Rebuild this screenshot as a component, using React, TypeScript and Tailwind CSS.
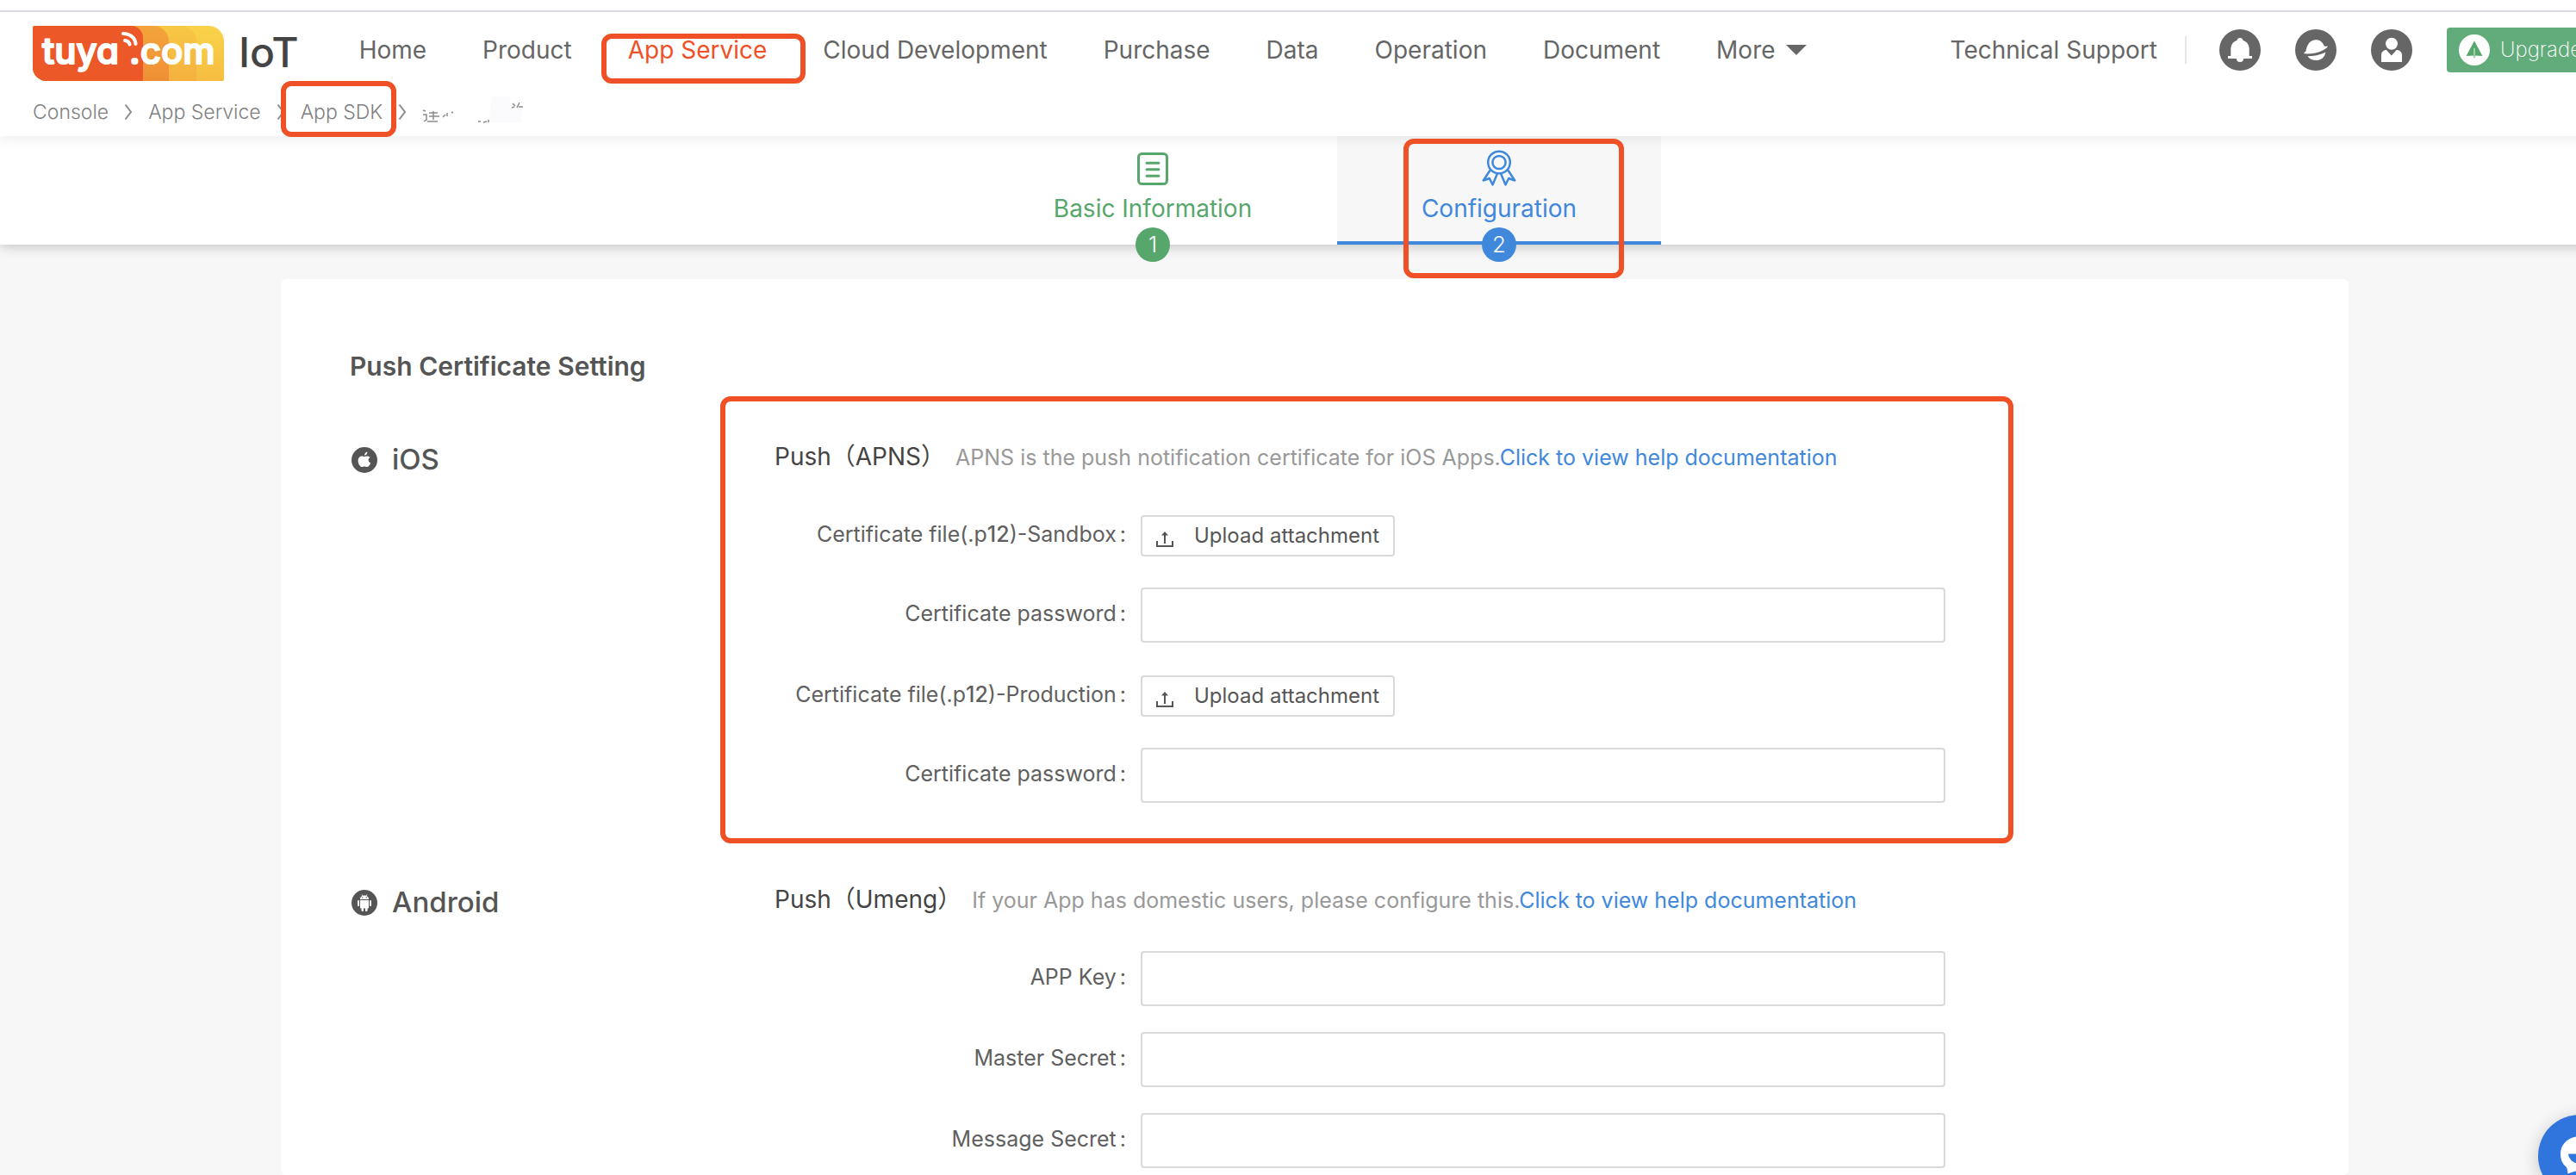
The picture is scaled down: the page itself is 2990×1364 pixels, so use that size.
import type { ReactNode } from 'react';

function Highlight({ className }: { className: string }) {
  return <span aria-hidden="true" className={`pointer-events-none absolute z-20 rounded-xl border-6 border-[#ef5026] ${className}`} />;
}

function TuyaLogo() {
  return (
    <svg width="222" height="64" viewBox="0 0 222 64" role="img" aria-label="tuya.com" className="mt-2 shrink-0">
      <defs>
        <linearGradient id="logo-yellow" x1="0" y1="0" x2="0" y2="1">
          <stop offset="0" stopColor="#f9d34a" />
          <stop offset="1" stopColor="#f6bd41" />
        </linearGradient>
        <linearGradient id="logo-amber" x1="0" y1="0" x2="0" y2="1">
          <stop offset="0" stopColor="#f8c845" />
          <stop offset="1" stopColor="#f4b03e" />
        </linearGradient>
        <linearGradient id="logo-orange" x1="0" y1="0" x2="0" y2="1">
          <stop offset="0" stopColor="#f3a43c" />
          <stop offset="1" stopColor="#f08f35" />
        </linearGradient>
      </defs>
      <path d="M2 0H204a18 18 0 0 1 18 18V62a2 2 0 0 1-2 2H16A16 16 0 0 1 0 48V2a2 2 0 0 1 2-2z" fill="url(#logo-yellow)" />
      <path d="M2 0H172a18 18 0 0 1 18 18V64H16A16 16 0 0 1 0 48V2z" fill="url(#logo-amber)" />
      <path d="M2 0H140a18 18 0 0 1 18 18V64H16A16 16 0 0 1 0 48V2z" fill="url(#logo-orange)" />
      <path d="M2 0H114a14 14 0 0 1 14 14V63l-1 1H16A16 16 0 0 1 0 48V2a2 2 0 0 1 2-2z" fill="#ed5829" />
      <g fill="#fff" stroke="#fff" strokeWidth="2" strokeLinejoin="round" className="text-[42px] font-medium [font-feature-settings:'cv11']">
        <text x="11" y="44">tuya</text>
        <text x="112" y="44">.com</text>
      </g>
      <g fill="none" stroke="#fff" strokeWidth="4" strokeLinecap="round">
        <path d="M105 9c8 0 14 5 14.500 12" />
        <path d="M107 17c3 0.500 5 2 5.500 4.500" />
      </g>
    </svg>
  );
}

function BellIcon() {
  return (
    <svg viewBox="0 0 48 48" className="size-12" aria-hidden="true">
      <circle cx="24" cy="24" r="24" fill="#666" />
      <g fill="#fff">
        <circle cx="24" cy="13.500" r="3.500" />
        <path d="M13.300 31.500V23c0-6 4-10.500 10.700-10.500S34.700 17 34.700 23v8.500z" />
        <path d="M10 31h28v3H10z" />
        <circle cx="24" cy="34" r="4" />
      </g>
    </svg>
  );
}

function PlanetIcon() {
  return (
    <svg viewBox="0 0 48 48" className="size-12" aria-hidden="true">
      <circle cx="24" cy="24" r="24" fill="#666" />
      <g fill="#fff">
        <path d="M10.300 28.300c0-1 1-2.300 2.200-2.700C13.500 17.500 18 12.300 24 12.300c5 0 8 2.700 9.800 7.200 1.500 0.600 3 0.100 4.200 0-1 2-3 3.500-6 5-6 3-13 4.300-21.700 3.800z" />
        <path d="M14.500 31.200c7 0 14-1.200 20.800-4.500-0.800 5.500-5 9.300-10.500 9.300-4.500 0-8-1.500-10.300-4.800z" />
      </g>
    </svg>
  );
}

function UserIcon() {
  return (
    <svg viewBox="0 0 48 48" className="size-12" aria-hidden="true">
      <circle cx="24" cy="24" r="24" fill="#666" />
      <g fill="#fff">
        <circle cx="24" cy="16.700" r="7" />
        <path d="M12 38v-8c0-3.500 2.500-6 6-6l5.800 6.500L29.700 24c3.800 0 6.300 2.500 6.300 6v8z" />
      </g>
    </svg>
  );
}

function UpgradeIcon() {
  return (
    <svg viewBox="0 0 36 36" className="size-9" aria-hidden="true">
      <circle cx="18" cy="18" r="18" fill="#fff" />
      <path d="M18 7.500 27.500 25 19.500 24.500 18 28 16.500 24.500 8.500 25z" fill="#57a76c" />
      <path d="M18 16v12" stroke="#b5dcc0" strokeWidth="1.500" />
    </svg>
  );
}

function DocumentIcon() {
  return (
    <svg viewBox="0 0 36 38" className="h-[38px] w-9" aria-hidden="true" fill="none" stroke="#57a76c" strokeWidth="3" strokeLinecap="round">
      <rect x="1.500" y="1.500" width="33" height="35" rx="4" />
      <path d="M11 12.300h14M11 19.800h14M11 27.300h14" />
    </svg>
  );
}

function MedalIcon() {
  return (
    <svg viewBox="0 0 40 42" className="h-[42px] w-10" aria-hidden="true" fill="none" stroke="#4088db" strokeWidth="2.500" strokeLinejoin="round">
      <circle cx="20" cy="14.500" r="12.800" />
      <circle cx="20" cy="14.500" r="7.600" />
      <path d="M10 23 1.800 35.500l7-2.500 3.700 7.500L18 27.500" />
      <path d="M30 23l8.200 12.500-7-2.500-3.700 7.500L22 27.500" />
    </svg>
  );
}

function AppleIcon() {
  return (
    <svg viewBox="0 0 30 30" className="size-[30px]" aria-hidden="true">
      <circle cx="15" cy="15" r="15" fill="#555" />
      <path d="M15 11.300c-1.200-0.700-2.200-1-3.400-0.800-2.400 0.400-4 2.400-4 5.200 0 3.600 2.400 7.400 4.700 7.400 1 0 1.600-0.600 2.800-0.600s1.800 0.600 2.800 0.600c1.800 0 3.500-2.400 4.200-4.600-1.700-0.700-2.500-1.900-2.500-3.400 0-1.300 0.700-2.300 1.900-3.100-1-1.200-2.200-1.600-3.400-1.600-1.200 0-2.100 0.500-3.100 0.900z" fill="#fff" />
      <path d="M15 9.800c0-2.200 1.500-4 3.400-4.200 0.100 2.300-1.400 4.100-3.400 4.200z" fill="#fff" />
    </svg>
  );
}

function AndroidIcon() {
  return (
    <svg viewBox="0 0 30 30" className="size-[30px]" aria-hidden="true">
      <circle cx="15" cy="15" r="15" fill="#555" />
      <g fill="#fff">
        <path d="M10 11c0-2.800 2.200-4.500 5-4.500s5 1.700 5 4.500z" />
        <path d="M10 12h10v8.500a1 1 0 0 1-1 1h-8a1 1 0 0 1-1-1z" />
        <rect x="7" y="12" width="2" height="7" rx="1" />
        <rect x="21" y="12" width="2" height="7" rx="1" />
        <rect x="11.500" y="20" width="2.500" height="5" rx="1" />
        <rect x="16" y="20" width="2.500" height="5" rx="1" />
      </g>
      <path d="M12 5.500l1 1.800M18 5.500l-1 1.800" stroke="#fff" strokeWidth="0.800" />
      <circle cx="12.700" cy="9" r="0.700" fill="#555" />
      <circle cx="17.300" cy="9" r="0.700" fill="#555" />
    </svg>
  );
}

function UploadIcon() {
  return (
    <svg viewBox="0 0 20 20" className="mt-2 size-5" aria-hidden="true" fill="none" stroke="#555" strokeWidth="2">
      <path d="M1 12v6h18v-6M10 15V3" />
      <path d="M6 5.500 10 1l4 4.500z" fill="#555" stroke="none" />
    </svg>
  );
}

function Chevron() {
  return (
    <svg viewBox="0 0 10 20" className="h-5 w-[10px]" aria-hidden="true" fill="none" stroke="#8c8c8c" strokeWidth="2">
      <path d="M1.500 1.500 8 10l-6.500 8.500" />
    </svg>
  );
}

/* App name in the breadcrumb, mostly rubbed out for privacy. */
function RedactedName() {
  return (
    <svg viewBox="0 0 120 36" className="h-9 w-[120px]" aria-hidden="true" fill="none" stroke="#8c8c8c" strokeWidth="1.500">
      <path d="M80 0h22v12h14v18H78z" fill="#fbfbfd" stroke="none" />
      <path d="M1 16l3 1M1 21h4v6l-3 2M6 29h12M8 19h10M8 23h12M13 17v10M24 24l3-3M29 19v4M34 18l2 1M65 29h3M71 30l4-1M77 27v3" />
      <path d="M105 8l3 3M110 13l3-6M112 12h5M104 13l3-1" />
    </svg>
  );
}

const navItems = ['Home', 'Product', 'App Service', 'Cloud Development', 'Purchase', 'Data', 'Operation', 'Document'];

function Header() {
  return (
    <header className="relative z-10 bg-white shadow-[0_4px_14px_rgba(0,0,0,0.07)]">
      <div className="h-3.5 border-b-2 border-[#dadbe2]" />
      <div className="flex h-22 items-center pr-9 pl-[38px] text-[28px] leading-10 text-[#666]">
        <a href="#home" className="flex shrink-0 items-center">
          <TuyaLogo />
          <span className="mt-1.5 ml-[17px] text-[48px] leading-none font-medium text-[#444]">IoT</span>
        </a>
        <nav className="ml-[70px] flex items-center gap-[65px] whitespace-nowrap">
          {navItems.map((item) =>
            item === 'App Service' ? (
              <a key={item} href="#app-service" className="relative text-[#ef5026]">
                {item}
                <Highlight className="top-px -right-[45px] -bottom-[19px] -left-[31px]" />
              </a>
            ) : (
              <a key={item} href={`#${item}`}>{item}</a>
            ),
          )}
          <button type="button" className="flex items-center gap-3">
            More
            <svg viewBox="0 0 24 12" className="h-3 w-6" aria-hidden="true">
              <path d="M0 0h24L12 12z" fill="#666" />
            </svg>
          </button>
        </nav>
        <div className="ml-auto flex shrink-0 items-center whitespace-nowrap">
          <a href="#support">Technical Support</a>
          <span className="mr-[38px] ml-8 h-8 w-0.5 bg-[#e5e5e5]" />
          <div className="flex items-center gap-10">
            <button type="button" aria-label="Notifications"><BellIcon /></button>
            <button type="button" aria-label="Region"><PlanetIcon /></button>
            <button type="button" aria-label="Account"><UserIcon /></button>
            <button type="button" className="flex h-13 w-44 items-center gap-3 rounded bg-[#62ab7b] pl-3.5 text-[24px] font-extralight text-white">
              <UpgradeIcon />
              Upgrade
            </button>
          </div>
        </div>
      </div>
      <nav aria-label="Breadcrumb" className="flex h-14 items-center gap-[18px] pl-[38px] text-[23px] leading-10 font-light whitespace-nowrap text-[#808080]">
        <a href="#console">Console</a>
        <Chevron />
        <a href="#app-service">App Service</a>
        <Chevron />
        <a href="#app-sdk" className="relative">
          App SDK
          <Highlight className="-top-4 -right-4 -bottom-[9px] -left-[23px]" />
        </a>
        <Chevron />
        <RedactedName />
      </nav>
    </header>
  );
}

function Steps() {
  return (
    <div className="relative flex h-[126px] justify-center bg-white text-[28px] leading-10 shadow-[0_2px_14px_rgba(0,0,0,0.22)]">
      <a href="#basic" className="relative ml-[26px] flex w-[376px] flex-col items-center pt-[19px] text-[#57a76c]">
        <DocumentIcon />
        <span className="mt-[7px]">Basic Information</span>
        <span className="absolute top-[106px] flex size-10 items-center justify-center rounded-full bg-[#57a76c] text-[26px] font-light text-white">1</span>
      </a>
      <a href="#configuration" className="relative ml-[26px] flex w-[376px] flex-col items-center border-b-4 border-[#4088db] bg-[#f7f7f7] pt-4 text-[#4088db]">
        <MedalIcon />
        <span className="mt-1.5">Configuration</span>
        <span className="absolute top-[106px] flex size-10 items-center justify-center rounded-full bg-[#4088db] text-[26px] font-light text-white">2</span>
        <Highlight className="top-[3px] right-[43px] -bottom-[43px] left-[77px]" />
      </a>
    </div>
  );
}

function Platform({ icon, name, children }: { icon: ReactNode; name: string; children: ReactNode }) {
  return (
    <section className="flex">
      <h2 className="flex h-12 w-[493px] shrink-0 items-center gap-[17px] pl-0.5 text-[33px] font-medium text-[#555]">
        {icon}
        {name}
      </h2>
      <div className="relative max-w-[1359px] flex-1">{children}</div>
    </section>
  );
}

function PushHeading({ service, note }: { service: string; note: string }) {
  return (
    <div className="mb-10 flex h-10 items-baseline leading-10 whitespace-nowrap">
      <h3 className="mr-3 text-[28px] text-[#444]">Push（{service}）</h3>
      <p className="text-[25px] text-[#999]">
        {note}
        <a href="#help" className="text-[#4088db]">Click to view help documentation</a>
      </p>
    </div>
  );
}

const labelClass = 'mr-[17px] w-[408px] shrink-0 pb-0.5 text-right text-[25px] whitespace-nowrap text-[#606060]';

function TextRow({ id, label, type = 'text' }: { id: string; label: string; type?: string }) {
  return (
    <div className="flex items-center">
      <label htmlFor={id} className={labelClass}>
        {label}
        <span className="ml-1">:</span>
      </label>
      <input id={id} type={type} className="h-16 w-full min-w-0 flex-1 rounded border-2 border-[#d9d9d9] bg-white px-5 text-[25px] outline-none" />
    </div>
  );
}

function UploadRow({ id, target }: { id: string; target: string }) {
  return (
    <div className="flex items-center pt-2 pb-1.5">
      <label htmlFor={id} className={labelClass}>
        Certificate file(.p<span className="font-medium">12</span>)-{target}
        <span className="ml-1">:</span>
      </label>
      <button id={id} type="button" className="flex h-12 items-center gap-6 rounded border-2 border-[#d9d9d9] bg-white px-4 text-[24px] whitespace-nowrap text-[#555]">
        <UploadIcon />
        Upload attachment
      </button>
    </div>
  );
}

export default function App() {
  return (
    <div className="relative min-h-screen overflow-hidden bg-[#f7f7f7] font-[Inter,'Noto_Sans_CJK_SC',sans-serif]">
      <div className="-mr-[62px]">
        <Header />
        <Steps />
        <main className="mx-auto mt-10 max-w-[2400px] rounded-md bg-white px-20 pt-20 pb-2">
          <h1 className="mb-16 text-[30px] leading-[42px] font-semibold text-[#555]">Push Certificate Setting</h1>
          <div className="flex flex-col gap-[92px]">
            <Platform icon={<AppleIcon />} name="iOS">
              <PushHeading service="APNS" note="APNS is the push notification certificate for iOS Apps." />
              <div className="flex flex-col gap-[30px]">
                <UploadRow id="sandbox-file" target="Sandbox" />
                <TextRow id="sandbox-password" type="password" label="Certificate password" />
                <UploadRow id="production-file" target="Production" />
                <TextRow id="production-password" type="password" label="Certificate password" />
              </div>
              <Highlight className="-top-[50px] -right-[79px] -bottom-[47px] -left-[63px]" />
            </Platform>
            <Platform icon={<AndroidIcon />} name="Android">
              <PushHeading service="Umeng" note="If your App has domestic users, please configure this." />
              <div className="flex flex-col gap-[30px]">
                <TextRow id="app-key" label="APP Key" />
                <TextRow id="master-secret" label="Master Secret" />
                <TextRow id="message-secret" label="Message Secret" />
              </div>
            </Platform>
          </div>
        </main>
      </div>
      <button type="button" aria-label="Open chat" className="absolute -right-[52px] -bottom-[26px] size-24 rounded-full bg-[#3074dd] shadow-[0_4px_20px_rgba(0,0,0,0.2)]">
        <svg viewBox="0 0 96 96" className="size-24" aria-hidden="true">
          <path d="M50 25c14 0 24 8.500 24 20.500S64 65 50 65c-5 0-9 1-15.500 3.500-0.500-4-0.500-6-2-8C28 57 26 51.500 26 45.500 26 33.500 36 25 50 25z" fill="#fff" />
          <path d="M35 45.500h30C64 53 58 57 50 57s-14-4-15-11.500z" fill="#3074dd" />
        </svg>
      </button>
    </div>
  );
}
